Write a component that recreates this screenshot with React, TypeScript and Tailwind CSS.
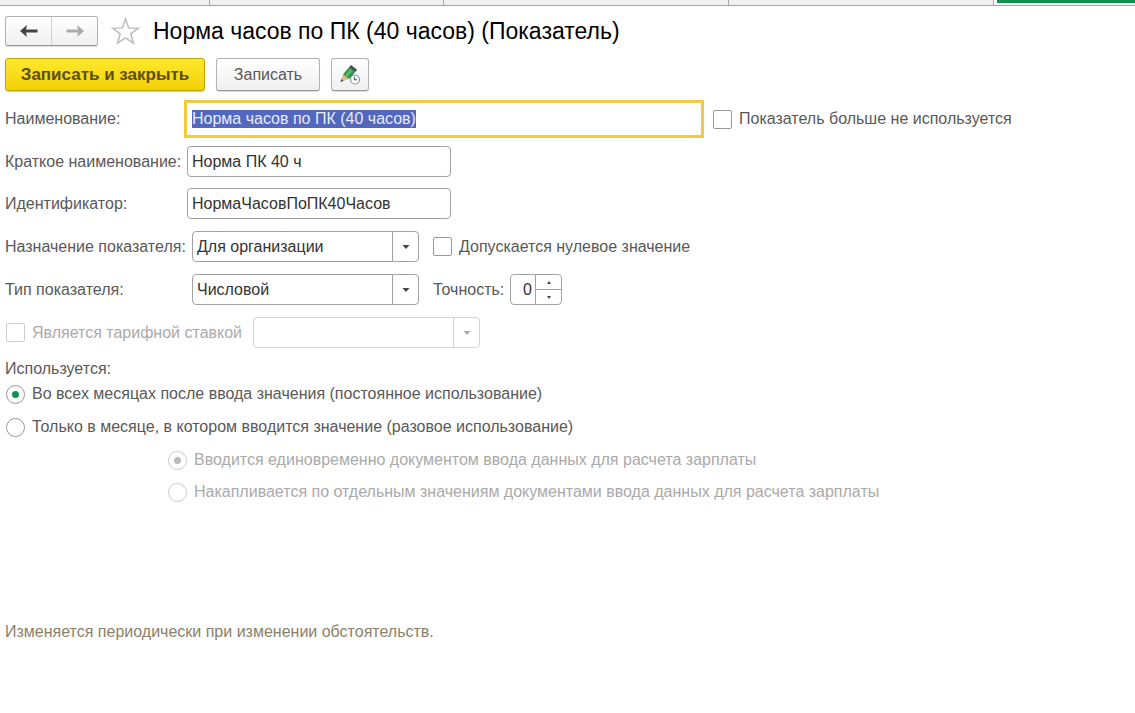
import { useEffect, useRef } from 'react';
import type { ReactNode } from 'react';

const fieldClass = 'h-[31px] rounded-sm border border-[#a3a3a3] bg-white text-[#333] outline-none';
const buttonClass = 'rounded-[3px] border border-[#b3b3b3] border-b-[#999] bg-linear-to-b from-white to-[#f0f0f0] shadow-[0_1px_1px_rgba(0,0,0,0.15)]';

function Dropdown({ id, label, value, disabled }: { id: string; label?: string; value: string; disabled?: boolean }) {
    return (
        <div className="relative h-[31px] w-[227px]">
            <select
                id={id}
                aria-label={label}
                disabled={disabled}
                className="h-full w-full appearance-none rounded-sm border border-[#a3a3a3] bg-white pl-1 pr-7 text-[#333] outline-none disabled:border-[#d4d4d4] disabled:opacity-100"
            >
                <option>{value}</option>
            </select>
            <span
                className={`pointer-events-none absolute inset-y-0 right-0 flex w-[27px] items-center justify-center border-l ${disabled ? 'border-[#d4d4d4] text-[#aaa]' : 'border-[#a3a3a3] text-[#444]'}`}
            >
                <svg width="8" height="4" viewBox="0 0 8 4" fill="currentColor">
                    <path d="M0.500 0h7L4 4z" />
                </svg>
            </span>
        </div>
    );
}

function Checkbox({ children, disabled }: { children: ReactNode; disabled?: boolean }) {
    return (
        <label className={`flex items-center gap-[7px] ${disabled ? 'text-[#aaa]' : ''}`}>
            <input
                type="checkbox"
                disabled={disabled}
                className="size-[19px] shrink-0 appearance-none rounded-xs border border-[#999] bg-white checked:bg-[#0f9150] disabled:border-[#ccc]"
            />
            {children}
        </label>
    );
}

function Radio({ name, checked, disabled, children }: { name: string; checked?: boolean; disabled?: boolean; children: ReactNode }) {
    return (
        <label className={`flex h-5 items-center gap-[7px] ${disabled ? 'text-[#aaa]' : ''}`}>
            <input
                type="radio"
                name={name}
                defaultChecked={checked}
                disabled={disabled}
                className="grid size-[19px] shrink-0 appearance-none place-items-center rounded-full border border-[#999] bg-white before:size-[7px] before:rounded-full checked:before:bg-[#0f9150] disabled:border-[#ccc] disabled:checked:before:bg-[#bbb]"
            />
            {children}
        </label>
    );
}

export default function App() {
    const nameRef = useRef<HTMLInputElement>(null);

    useEffect(() => {
        nameRef.current?.focus();
        nameRef.current?.select();
    }, []);

    return (
        <div className="min-h-screen bg-white font-['Liberation_Sans',Arial,sans-serif] text-[16px] leading-5 text-[#595959]">
            {/* Bottom edge of the window tabs */}
            <div className="flex h-1.5 border-b border-[#a5a5a5] bg-[#f0f0f0]">
                <div className="w-[210px] border-r border-[#a5a5a5]" />
                <div className="w-[234px] border-r border-[#a5a5a5]" />
                <div className="w-[285px] border-r border-[#a5a5a5]" />
                <div className="w-[265px] border-r border-[#a5a5a5]" />
                <div className="flex-1 bg-white pl-[3px]">
                    <div className="h-[3px] bg-[#0f9150]" />
                </div>
            </div>

            <main className="px-[5px]">
                <header className="flex h-[50px] items-center">
                    <div className={`flex h-[30px] w-[93px] ${buttonClass}`}>
                        <button type="button" aria-label="Назад" className="flex flex-1 items-center justify-center border-r border-[#d0d0d0] text-[#444]">
                            <svg width="18" height="12" viewBox="0 0 18 12" fill="currentColor">
                                <path d="M0 6 7 0 6 4.500h11.500v3H6L7 12z" />
                            </svg>
                        </button>
                        <button type="button" aria-label="Вперед" className="flex flex-1 items-center justify-center text-[#aaa]">
                            <svg width="18" height="12" viewBox="0 0 18 12" fill="currentColor">
                                <path d="M18 6 11 0l1 4.500H0.500v3H12L11 12z" />
                            </svg>
                        </button>
                    </div>
                    <button type="button" aria-label="В избранное" className="mx-3">
                        <svg width="31" height="28" viewBox="0 0 30 28" fill="none" stroke="#bdbdbd" strokeWidth="1.500">
                            <path d="M15 2l3.200 8.900 9.800.2-7.700 5.800 2.700 9.300-8-5.400-8 5.400 2.700-9.300L2 11.100l9.800-.2z" />
                        </svg>
                    </button>
                    <h1 className="text-[23px] leading-7 text-black">Норма часов по ПК (40 часов) (Показатель)</h1>
                </header>

                <div className="mt-0.5 flex gap-[11px]">
                    <button
                        type="button"
                        className="h-[33px] w-[200px] rounded-[3px] border border-[#c4a400] bg-linear-to-b from-[#ffe92a] to-[#f2d000] text-[17px] font-bold text-[#5c4f12] shadow-[0_1px_1px_rgba(0,0,0,0.2)]"
                    >
                        Записать и закрыть
                    </button>
                    <button type="button" className={`h-[33px] w-[104px] ${buttonClass}`}>
                        Записать
                    </button>
                    <button type="button" aria-label="История изменений" className={`flex h-[33px] w-[38px] items-center justify-center ${buttonClass}`}>
                        <svg width="22" height="22" viewBox="0 0 22 22">
                            <path d="M1.500 18 4 10.500l6 4.500z" fill="#e3b98c" />
                            <path d="M1.500 18l1-3 2 1.700z" fill="#444" />
                            <path d="M4 10.500 9.800 3.500l6.200 4.700L10 15z" fill="#2f8f43" />
                            <path d="M5.500 11.600 11.300 4.600l2.700 2L8.200 13.700z" fill="#4fb862" />
                            <path d="M9.800 3.500 12 1l6.200 4.700L16 8.200z" fill="#465056" />
                            <circle cx="16" cy="15.500" r="4.500" fill="#fff" stroke="#7d8b96" strokeWidth="1.100" />
                            <path d="M15.500 12.800v3h2.700" fill="none" stroke="#4a5358" strokeWidth="1.100" />
                        </svg>
                    </button>
                </div>

                <form>
                    <div className="mt-3 space-y-[11px]">
                        <div className="flex items-center">
                            <label htmlFor="name" className="w-[182px] whitespace-nowrap">Наименование:</label>
                            <input
                                id="name"
                                ref={nameRef}
                                defaultValue="Норма часов по ПК (40 часов)"
                                className="mr-3 h-8 w-[514px] bg-white pl-[5px] text-[#333] outline-3 outline-[#f3cb40] selection:bg-[#5267bd] selection:text-[#e6ebfa]"
                            />
                            <Checkbox>Показатель больше не используется</Checkbox>
                        </div>
                        <div className="flex items-center">
                            <label htmlFor="shortName" className="w-[182px] whitespace-nowrap">Краткое наименование:</label>
                            <input id="shortName" defaultValue="Норма ПК 40 ч" className={`w-[264px] pl-1 ${fieldClass}`} />
                        </div>
                        <div className="flex items-center">
                            <label htmlFor="identifier" className="w-[182px] whitespace-nowrap">Идентификатор:</label>
                            <input id="identifier" defaultValue="НормаЧасовПоПК40Часов" className={`w-[264px] pl-1 ${fieldClass}`} />
                        </div>
                    </div>

                    <div className="mt-3 space-y-3">
                        <div className="flex items-center">
                            <label htmlFor="purpose" className="w-[187px] whitespace-nowrap">Назначение показателя:</label>
                            <div className="mr-3.5">
                                <Dropdown id="purpose" value="Для организации" />
                            </div>
                            <Checkbox>Допускается нулевое значение</Checkbox>
                        </div>
                        <div className="flex items-center">
                            <label htmlFor="kind" className="w-[187px] whitespace-nowrap">Тип показателя:</label>
                            <div className="mr-3.5">
                                <Dropdown id="kind" value="Числовой" />
                            </div>
                            <label htmlFor="precision" className="w-[77px]">Точность:</label>
                            <div className={`flex w-[52px] overflow-hidden ${fieldClass}`}>
                                <input id="precision" inputMode="numeric" defaultValue="0" className="w-6 pr-[3px] text-right outline-none" />
                                <div className="flex flex-1 flex-col border-l border-[#a3a3a3]">
                                    <button type="button" aria-label="Увеличить" className="flex flex-1 items-center justify-center border-b border-[#a3a3a3]">
                                        <svg width="4" height="3" viewBox="0 0 4 3" fill="#444">
                                            <path d="M0 3h4L2 0z" />
                                        </svg>
                                    </button>
                                    <button type="button" aria-label="Уменьшить" className="flex flex-1 items-center justify-center">
                                        <svg width="4" height="3" viewBox="0 0 4 3" fill="#444">
                                            <path d="M0 0h4L2 3z" />
                                        </svg>
                                    </button>
                                </div>
                            </div>
                        </div>
                        <div className="flex items-center gap-[11px] pl-px">
                            <Checkbox disabled>Является тарифной ставкой</Checkbox>
                            <Dropdown id="tariff" label="Тарифная ставка" value="" disabled />
                        </div>
                    </div>

                    <fieldset className="mt-[11px]">
                        <legend>Используется:</legend>
                        <div className="mt-[5px] space-y-[13px] pl-px">
                            <Radio name="usage" checked>Во всех месяцах после ввода значения (постоянное использование)</Radio>
                            <Radio name="usage">Только в месяце, в котором вводится значение (разовое использование)</Radio>
                            <div className="space-y-3 pl-[162px]">
                                <Radio name="input" checked disabled>Вводится единовременно документом ввода данных для расчета зарплаты</Radio>
                                <Radio name="input" disabled>Накапливается по отдельным значениям документами ввода данных для расчета зарплаты</Radio>
                            </div>
                        </div>
                    </fieldset>
                </form>

                <p className="mt-[120px] text-[#8a8168]">Изменяется периодически при изменении обстоятельств.</p>
            </main>
        </div>
    );
}
